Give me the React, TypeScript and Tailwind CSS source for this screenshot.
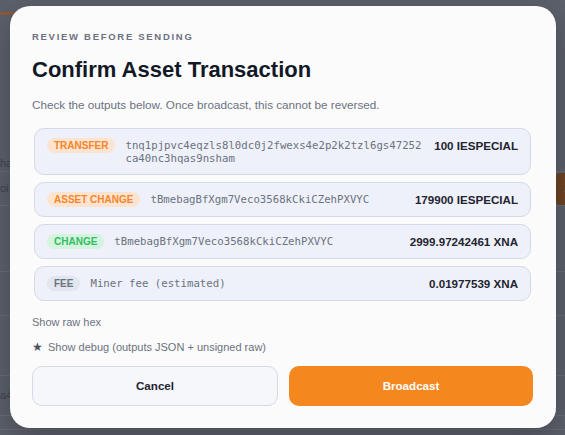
const outputs = [
  {
    kind: "TRANSFER",
    badge: "bg-[#fde4d0] text-[#f5862a]",
    address: "tnq1pjpvc4eqzls8l0dc0j2fwexs4e2p2k2tzl6gs47252ca40nc3hqas9nsham",
    amount: "100 IESPECIAL",
  },
  {
    kind: "ASSET CHANGE",
    badge: "bg-[#fde4d0] text-[#f5862a]",
    address: "tBmebagBfXgm7Veco3568kCkiCZehPXVYC",
    amount: "179900 IESPECIAL",
  },
  {
    kind: "CHANGE",
    badge: "bg-[#d5f3df] text-[#2fbf62]",
    address: "tBmebagBfXgm7Veco3568kCkiCZehPXVYC",
    amount: "2999.97242461 XNA",
  },
  {
    kind: "FEE",
    badge: "bg-[#e2e6ee] text-[#6b7280]",
    address: "Miner fee (estimated)",
    amount: "0.01977539 XNA",
  },
];

const sans = "font-['Liberation_Sans',Arial,sans-serif]";
const mono = "font-['DejaVu_Sans_Mono','Liberation_Mono',monospace]";

function OutputRow({ o }: { o: (typeof outputs)[number] }) {
  return (
    <div className="mx-[2px] flex items-start rounded-[10px] border border-[#d5dae6] bg-[#eef1f9] px-3 py-[9px]">
      <span className={`${o.badge} shrink-0 rounded-full px-[7px] text-[10px] font-bold leading-[15px]`}>
        {o.kind}
      </span>
      <div className="ml-[10px] min-w-0 flex-1">
        <div className={`${mono} max-w-[300px] break-all pt-px text-[10.7px] leading-[13px] text-[#6b7280]`}>
          {o.address}
        </div>
      </div>
      <span className="ml-[10px] shrink-0 text-[11.6px] font-bold leading-[15px] text-[#1f2430]">{o.amount}</span>
    </div>
  );
}

export default function App() {
  return (
    <div className={`${sans} relative h-[435px] w-[565px] overflow-hidden bg-[#5c606b]`}>
      {/* dimmed page behind the dialog */}
      <div className="flex flex-col">
        <div className="mt-[12px] h-[3px] w-[40px] bg-[#8a5a3a]" />
        <div className="mt-[140px] flex h-[17px] items-center border-b border-[#676b76] text-[11px] text-[#3f434d]">
          ha
        </div>
        <div className="flex h-[34px] items-center justify-between border-b border-[#676b76] text-[11px] text-[#3f434d]">
          <span>oi</span>
          <span className="mr-[-20px] flex h-[32px] items-center rounded-l bg-[#6e4324] px-2 text-[#8c6a52]">As</span>
        </div>
        <div className="h-[66px] border-b border-[#676b76]" />
        <div className="h-[44px] border-b border-[#676b76]" />
        <div className="h-[60px] border-b border-[#676b76]" />
        <div className="flex h-[40px] items-center border-b border-[#676b76] text-[11px] text-[#3f434d]">a4</div>
        <div className="h-[14px] border-b border-[#676b76]" />
      </div>

      <div className="absolute left-[10px] top-[6px] flex h-[422px] w-[546px] flex-col rounded-[20px] bg-[#fbfbfc] pb-[22px] pl-[22px] pr-[23px] pt-[25px] shadow-[0_10px_30px_rgba(0,0,0,0.25)]">
        <div className="text-[9.5px] font-bold uppercase leading-[12px] tracking-[0.18em] text-[#6b7080]">
          Review before sending
        </div>
        <h2 className="mt-[13px] text-[22px] font-bold leading-[28px] text-[#121826]">Confirm Asset Transaction</h2>
        <p className="mt-[13px] text-[11.7px] leading-[16px] text-[#6b7280]">
          Check the outputs below. Once broadcast, this cannot be reversed.
        </p>

        <div className="mt-[15px] flex flex-col gap-[7px]">
          {outputs.map((o) => (
            <OutputRow key={o.kind} o={o} />
          ))}
        </div>

        <div className="mt-[14px] text-[11px] leading-[14px] text-[#6b7280]">Show raw hex</div>
        <div className="mt-[11px] flex items-center gap-[5px] text-[11px] leading-[14px] text-[#6b7280]">
          <span className="text-[12px] text-[#4b5060]">★</span>
          <span>Show debug (outputs JSON + unsigned raw)</span>
        </div>

        <div className="mt-auto flex gap-[11px]">
          <button className="flex h-[40px] flex-1 items-center justify-center rounded-[10px] border border-[#d5dae6] bg-[#f5f7fa] text-[11.6px] font-bold text-[#1f2430]">
            Cancel
          </button>
          <button className="flex h-[40px] flex-1 items-center justify-center rounded-[10px] bg-[#f5871f] text-[11.6px] font-bold text-white">
            Broadcast
          </button>
        </div>
      </div>
    </div>
  );
}
